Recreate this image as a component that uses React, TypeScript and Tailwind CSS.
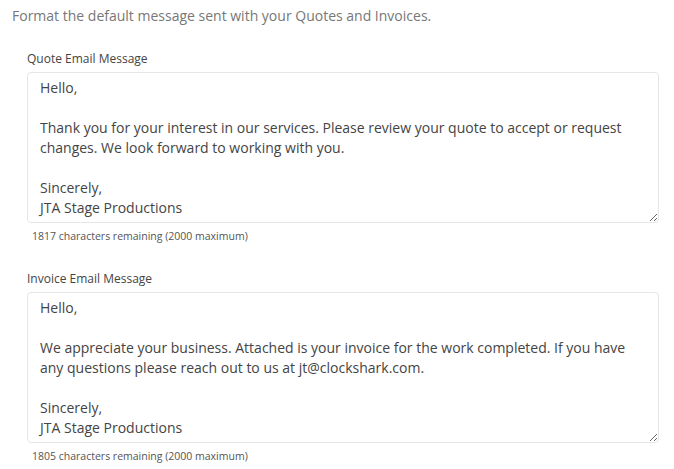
import { useState } from "react";

const MAX = 2000;

const quoteDefault =
    "Hello,\n\nThank you for your interest in our services. Please review your quote to accept or request changes. We look forward to working with you.\n\nSincerely,\nJTA Stage Productions";

const invoiceDefault =
    "Hello,\n\nWe appreciate your business. Attached is your invoice for the work completed. If you have any questions please reach out to us at jt@clockshark.com.\n\nSincerely,\nJTA Stage Productions";

const MessageField = ({ label, value, remaining, onChange }: { label: string; value: string; remaining: number; onChange: (v: string) => void }) => (
    <div className="mb-[28px]">
        <label className="block text-[12px] text-[#444] leading-[16px] mb-[5px]">{label}</label>
        <textarea
            className="block w-[632px] h-[151px] px-[12px] pt-[5px] pb-[5px] border border-[#e6e6e6] rounded-[4px] text-[14px] leading-[20px] text-[#444] resize-y focus:outline-none"
            value={value}
            onChange={(e) => onChange(e.target.value)}
        />
        <p className="mt-[6px] ml-[5px] text-[10.5px] leading-[14px] text-[#555]">
            {remaining} characters remaining ({MAX} maximum)
        </p>
    </div>
);

const App = () => {
    const [quote, setQuote] = useState(quoteDefault);
    const [invoice, setInvoice] = useState(invoiceDefault);

    return (
        <div className="bg-white min-h-[469px] pl-[12px] pt-[6px]" style={{ fontFamily: '"Open Sans", sans-serif' }}>
            <p className="text-[14px] leading-[20px] text-[#777]">Format the default message sent with your Quotes and Invoices.</p>
            <div className="pl-[15px] mt-[25px]">
                <MessageField label="Quote Email Message" value={quote} remaining={1817} onChange={setQuote} />
                <MessageField label="Invoice Email Message" value={invoice} remaining={1805} onChange={setInvoice} />
            </div>
        </div>
    );
};

export default App;
